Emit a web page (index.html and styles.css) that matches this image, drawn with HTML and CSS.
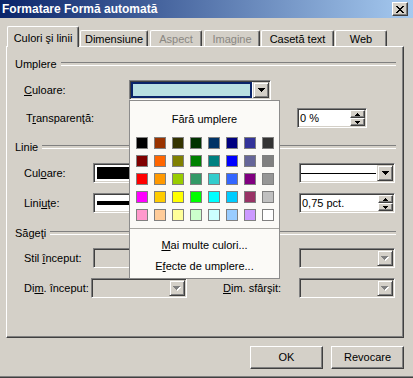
FILE: index.html
```html
<!DOCTYPE html>
<html lang="ro">
<head>
<meta charset="utf-8">
<title>Formatare Formă automată</title>
<link rel="stylesheet" href="styles.css">
</head>
<body>
<div class="window">
  <div class="titlebar">
    <span class="title">Formatare Formă automată</span>
    <span class="close"><svg width="8" height="7" viewBox="0 0 8 7"><path d="M0 0h2v1H0zM6 0h2v1H6zM1 1h2v1H1zM5 1h2v1H5zM2 2h4v1H2zM3 3h2v1H3zM2 4h4v1H2zM1 5h2v1H1zM5 5h2v1H5zM0 6h2v1H0zM6 6h2v1H6z"/></svg></span>
  </div>

  <div class="tabs">
    <div class="tab active w-culori">Culori şi linii</div>
    <div class="tab w-dim">Dimensiune</div>
    <div class="tab disabled w-aspect">Aspect</div>
    <div class="tab disabled w-imagine">Imagine</div>
    <div class="tab w-caseta">Casetă text</div>
    <div class="tab w-web">Web</div>
  </div>

  <div class="panel">
    <div class="ghead first"><span>Umplere</span></div>

    <div class="row row-fill">
      <span class="lbl"><u>C</u>uloare:</span>
      <div class="combo-wrap">
        <div class="field fill-combo">
          <div class="fill-color"></div>
          <div class="arrow"><svg width="7" height="4" viewBox="0 0 7 4"><path d="M0 0h7v1H0zM1 1h5v1H1zM2 2h3v1H2zM3 3h1v1H3z"/></svg></div>
        </div>
        <div class="popup">
          <div class="popup-none">Fără umplere</div>
          <div class="palette">
            <i style="background:#000000"></i><i style="background:#993300"></i><i style="background:#333300"></i><i style="background:#003300"></i><i style="background:#003366"></i><i style="background:#000080"></i><i style="background:#333399"></i><i style="background:#333333"></i>
            <i style="background:#800000"></i><i style="background:#ff6600"></i><i style="background:#808000"></i><i style="background:#008000"></i><i style="background:#008080"></i><i style="background:#0000ff"></i><i style="background:#666699"></i><i style="background:#808080"></i>
            <i style="background:#ff0000"></i><i style="background:#ff9900"></i><i style="background:#99cc00"></i><i style="background:#339966"></i><i style="background:#33cccc"></i><i style="background:#3366ff"></i><i style="background:#800080"></i><i style="background:#969696"></i>
            <i style="background:#ff00ff"></i><i style="background:#ffcc00"></i><i style="background:#ffff00"></i><i style="background:#00ff00"></i><i style="background:#00ffff"></i><i style="background:#00ccff"></i><i style="background:#993366"></i><i style="background:#c0c0c0"></i>
            <i style="background:#ff99cc"></i><i style="background:#ffcc99"></i><i style="background:#ffff99"></i><i style="background:#ccffcc"></i><i style="background:#ccffff"></i><i style="background:#99ccff"></i><i style="background:#cc99ff"></i><i style="background:#ffffff"></i>
          </div>
          <div class="popup-sep"></div>
          <div class="popup-item first-item"><u>M</u>ai multe culori...</div>
          <div class="popup-item">E<u>f</u>ecte de umplere...</div>
        </div>
      </div>
    </div>

    <div class="row row-transp">
      <span class="lbl lbl-transp">T<u>r</u>ansparenţă:</span>
      <div class="slider"></div>
      <div class="field text-field">
        <span class="val">0 %</span>
        <div class="spin">
          <b><svg width="5" height="3" viewBox="0 0 5 3"><path d="M2 0h1v1H2zM1 1h3v1H1zM0 2h5v1H0z"/></svg></b>
          <b><svg width="5" height="3" viewBox="0 0 5 3"><path d="M0 0h5v1H0zM1 1h3v1H1zM2 2h1v1H2z"/></svg></b>
        </div>
      </div>
    </div>

    <div class="ghead"><span>Linie</span></div>

    <div class="row row-grid r-1">
      <span class="lbl">Cul<u>o</u>are:</span>
      <div class="field">
        <div class="line-color"></div>
        <div class="arrow"><svg width="7" height="4" viewBox="0 0 7 4"><path d="M0 0h7v1H0zM1 1h5v1H1zM2 2h3v1H2zM3 3h1v1H3z"/></svg></div>
      </div>
      <span></span>
      <span></span>
      <div class="field">
        <div class="line-style thin"><i></i></div>
        <div class="arrow"><svg width="7" height="4" viewBox="0 0 7 4"><path d="M0 0h7v1H0zM1 1h5v1H1zM2 2h3v1H2zM3 3h1v1H3z"/></svg></div>
      </div>
    </div>

    <div class="row row-grid r-2">
      <span class="lbl">Lini<u>u</u>ţe:</span>
      <div class="field">
        <div class="line-style thick"><i></i></div>
        <div class="arrow"><svg width="7" height="4" viewBox="0 0 7 4"><path d="M0 0h7v1H0zM1 1h5v1H1zM2 2h3v1H2zM3 3h1v1H3z"/></svg></div>
      </div>
      <span></span>
      <span></span>
      <div class="field text-field">
        <span class="val">0,75 pct.</span>
        <div class="spin">
          <b><svg width="5" height="3" viewBox="0 0 5 3"><path d="M2 0h1v1H2zM1 1h3v1H1zM0 2h5v1H0z"/></svg></b>
          <b><svg width="5" height="3" viewBox="0 0 5 3"><path d="M0 0h5v1H0zM1 1h3v1H1zM2 2h1v1H2z"/></svg></b>
        </div>
      </div>
    </div>

    <div class="ghead g-arrows"><span>Săgeţi</span></div>

    <div class="row row-grid r-3">
      <span class="lbl">Stil <u>î</u>nceput:</span>
      <div class="field disabled">
        <div class="arrow"><svg width="8" height="5" viewBox="0 0 8 5"><path fill="#fff" d="M1 1h7v1H1zM2 2h5v1H2zM3 3h3v1H3zM4 4h1v1H4z"/><path fill="#808080" d="M0 0h7v1H0zM1 1h5v1H1zM2 2h3v1H2zM3 3h1v1H3z"/></svg></div>
      </div>
      <span></span>
      <span></span>
      <div class="field disabled">
        <div class="arrow"><svg width="8" height="5" viewBox="0 0 8 5"><path fill="#fff" d="M1 1h7v1H1zM2 2h5v1H2zM3 3h3v1H3zM4 4h1v1H4z"/><path fill="#808080" d="M0 0h7v1H0zM1 1h5v1H1zM2 2h3v1H2zM3 3h1v1H3z"/></svg></div>
      </div>
    </div>

    <div class="row row-grid r-4">
      <span class="lbl">Di<u>m</u>. început:</span>
      <div class="field disabled shift">
        <div class="arrow"><svg width="8" height="5" viewBox="0 0 8 5"><path fill="#fff" d="M1 1h7v1H1zM2 2h5v1H2zM3 3h3v1H3zM4 4h1v1H4z"/><path fill="#808080" d="M0 0h7v1H0zM1 1h5v1H1zM2 2h3v1H2zM3 3h1v1H3z"/></svg></div>
      </div>
      <span></span>
      <span class="lbl"><u>D</u>im. sfârşit:</span>
      <div class="field disabled">
        <div class="arrow"><svg width="8" height="5" viewBox="0 0 8 5"><path fill="#fff" d="M1 1h7v1H1zM2 2h5v1H2zM3 3h3v1H3zM4 4h1v1H4z"/><path fill="#808080" d="M0 0h7v1H0zM1 1h5v1H1zM2 2h3v1H2zM3 3h1v1H3z"/></svg></div>
      </div>
    </div>
  </div>

  <div class="buttons">
    <div class="btn">OK</div>
    <div class="btn">Revocare</div>
  </div>
</div>
</body>
</html>
```

FILE: styles.css
```css
* { box-sizing: border-box; }
html, body { margin: 0; padding: 0; }
body {
  width: 413px;
  height: 378px;
  overflow: hidden;
  background: #d4d0c8;
  font-family: "Liberation Sans", Arial, sans-serif;
  font-size: 11px;
  color: #000;
}
u { text-decoration: underline; text-underline-offset: 1px; }

.window {
  height: 378px;
  display: flex;
  flex-direction: column;
  border-bottom: 1px solid #404040;
  box-shadow: inset 0 -1px #808080;
}

/* title bar */
.titlebar {
  height: 18px;
  flex: none;
  background: linear-gradient(to right, #0a246a, #a6caf0);
  display: flex;
  align-items: center;
  justify-content: space-between;
  padding: 0 5px 0 2px;
}
.title {
  color: #fff;
  font-weight: bold;
  font-size: 12px;
}
.close {
  width: 16px;
  height: 14px;
  background: #d4d0c8;
  border: 1px solid;
  border-color: #fff #404040 #404040 #fff;
  box-shadow: inset -1px -1px #808080;
  display: flex;
  align-items: center;
  justify-content: center;
  padding-right: 1px;
}
.close svg { display: block; }

/* tabs */
.tabs {
  display: flex;
  align-items: flex-end;
  height: 20px;
  margin-top: 8px;
  padding-left: 7px;
  flex: none;
}
.tab {
  height: 16px;
  padding-top: 2px;
  line-height: 13px;
  text-align: center;
  white-space: nowrap;
  border-top: 1px solid #fff;
  border-left: 1px solid #fff;
  border-right: 1px solid #404040;
  box-shadow: inset -1px 0 #808080;
  border-radius: 2px 2px 0 0;
  background: #d4d0c8;
}
.tab.active {
  height: 21px;
  margin-bottom: -1px;
  padding-top: 5px;
  position: relative;
  z-index: 1;
}
.tab.disabled { color: #8a8782; }
.w-culori { width: 72px; margin-right: 1px; }
.w-dim { width: 68px; margin-right: 2px; }
.w-aspect { width: 52px; margin-right: 2px; }
.w-imagine { width: 56px; margin-right: 1px; }
.w-caseta { width: 73px; margin-right: 1px; }
.w-web { width: 52px; }

/* panel */
.panel {
  position: relative;
  flex: none;
  margin: 0 9px 0 6px;
  height: 292px;
  border: 1px solid;
  border-color: #fff #404040 #404040 #fff;
  box-shadow: inset -1px -1px #808080;
  padding: 0 7px;
}

.ghead {
  display: flex;
  align-items: center;
  height: 14px;
  margin-top: 12px;
  padding-left: 1px;
}
.ghead.first { margin-top: 10px; }
.ghead.g-arrows { margin-top: 13px; }
.ghead::after {
  content: "";
  flex: 1;
  height: 2px;
  border-top: 1px solid #808080;
  border-bottom: 1px solid #fff;
  margin-left: 4px;
}

.row {
  display: grid;
  align-items: center;
  height: 20px;
  padding-left: 10px;
}
.row-fill { grid-template-columns: 105px 142px; margin-top: 9px; }
.row-transp { grid-template-columns: 105px 168px 70px; margin-top: 8px; }
.lbl-transp { padding-left: 2px; }
.row-grid { grid-template-columns: 69px 96px 34px 76px 96px; }
.r-1 { margin-top: 9px; }
.r-2 { margin-top: 10px; }
.r-3 { margin-top: 8px; }
.r-4 { margin-top: 10px; }
.lbl { white-space: nowrap; }

/* sunken fields */
.field {
  height: 20px;
  display: flex;
  padding: 1px;
  background: #fff;
  border: 1px solid;
  border-color: #808080 #fff #fff #808080;
  box-shadow: inset 1px 1px #404040, inset -1px -1px #d4d0c8;
}
.field.disabled { background: #d4d0c8; }
.field.shift { margin-left: -2px; margin-right: 2px; }

.arrow {
  width: 16px;
  flex: none;
  margin-left: auto;
  background: #d4d0c8;
  border: 1px solid;
  border-color: #d4d0c8 #404040 #404040 #d4d0c8;
  box-shadow: inset 1px 1px #fff, inset -1px -1px #808080;
  display: flex;
  align-items: center;
  justify-content: center;
}
.arrow svg, .spin svg { display: block; }

.combo-wrap { position: relative; }
.fill-combo { width: 142px; }
.fill-color {
  flex: 1;
  background: #b9dfe2;
  border: 2px solid #0a246a;
  margin-right: 1px;
}
.line-color {
  flex: 1;
  margin: 2px;
  background: #000;
}
.line-style {
  flex: 1;
  display: flex;
  align-items: center;
}
.line-style i { display: block; flex: 1; background: #000; }
.line-style.thin i { height: 1px; margin-right: 1px; }
.line-style.thick { padding-left: 2px; }
.line-style.thick i { height: 4px; }

.text-field .val { padding-left: 1px; line-height: 16px; white-space: nowrap; }
.spin {
  width: 15px;
  margin-left: auto;
  display: flex;
  flex-direction: column;
}
.spin b {
  flex: 1;
  background: #d4d0c8;
  border: 1px solid;
  border-color: #fff #404040 #404040 #fff;
  box-shadow: inset -1px -1px #808080;
  display: flex;
  align-items: center;
  justify-content: center;
}

/* colour popup */
.popup {
  position: absolute;
  z-index: 10;
  top: 100%;
  left: 0;
  width: 151px;
  height: 179px;
  background: #fbfaf7;
  border: 1px solid #8c8c8c;
  padding-top: 11px;
}
.popup-none {
  text-align: center;
  line-height: 14px;
  height: 14px;
}
.palette {
  display: grid;
  grid-template-columns: repeat(8, 12px);
  grid-auto-rows: 12px;
  gap: 6px;
  margin: 11px 0 0 6px;
}
.palette i {
  display: block;
  border: 1px solid #808080;
}
.popup-sep {
  height: 1px;
  background: #a7a6a2;
  margin-top: 7px;
}
.popup-item {
  text-align: center;
  line-height: 16px;
  height: 16px;
  margin-top: 5px;
}
.popup-item.first-item { margin-top: 8px; }

/* buttons */
.buttons {
  display: flex;
  justify-content: flex-end;
  gap: 8px;
  margin-top: 8px;
  padding-right: 9px;
}
.btn {
  width: 73px;
  height: 23px;
  text-align: center;
  line-height: 21px;
  border: 1px solid;
  border-color: #fff #404040 #404040 #fff;
  box-shadow: inset -1px -1px #808080;
}
```
